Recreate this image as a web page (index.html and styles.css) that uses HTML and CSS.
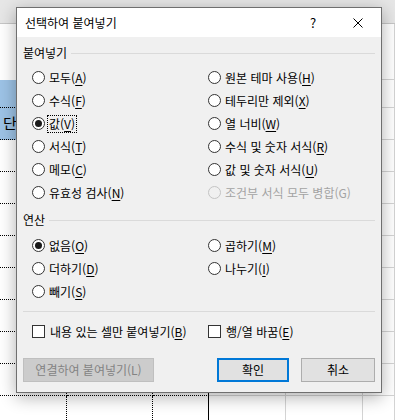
FILE: index.html
```html
<!DOCTYPE html>
<html lang="ko">
<head>
    <meta charset="UTF-8">
    <meta name="viewport" content="width=device-width, initial-scale=1.0">
    <title>선택하여 붙여넣기</title>
    <link rel="stylesheet" href="styles.css">
</head>
<body>
    <!-- worksheet behind the dialog -->
    <div class="sheet">
        <div class="sheet-head"></div>
        <div class="row tall"><span></span><span></span><span></span><span></span><span></span><span></span></div>
        <div class="row short sel"><span></span><span></span><span></span><span></span><span></span><span></span></div>
        <div class="row sel"><span class="cell-text">단가</span><span></span><span></span><span></span><span></span><span></span></div>
        <div class="row"><span></span><span></span><span></span><span></span><span></span><span></span></div>
        <div class="row"><span></span><span></span><span></span><span></span><span></span><span></span></div>
        <div class="row"><span></span><span></span><span></span><span></span><span></span><span></span></div>
        <div class="row"><span></span><span></span><span></span><span></span><span></span><span></span></div>
        <div class="row"><span></span><span></span><span></span><span></span><span></span><span></span></div>
        <div class="row"><span></span><span></span><span></span><span></span><span></span><span></span></div>
        <div class="row"><span></span><span></span><span></span><span></span><span></span><span></span></div>
        <div class="row"><span></span><span></span><span></span><span></span><span></span><span></span></div>
        <div class="row"><span></span><span></span><span></span><span></span><span></span><span></span></div>
    </div>

    <div class="dialog">
        <div class="titlebar">
            <span class="title">선택하여 붙여넣기</span>
            <span class="help">?</span>
            <span class="close">
                <svg width="10" height="10" viewBox="0 0 10 10">
                    <path d="M0.5 0.5 L9.5 9.5 M9.5 0.5 L0.5 9.5" stroke="#000" stroke-width="1" fill="none"/>
                </svg>
            </span>
        </div>

        <div class="body">
            <div class="group-label">붙여넣기</div>
            <div class="options">
                <div class="opt"><span class="radio"></span><span>모두(<u>A</u>)</span></div>
                <div class="opt"><span class="radio"></span><span>원본 테마 사용(<u>H</u>)</span></div>
                <div class="opt"><span class="radio"></span><span>수식(<u>F</u>)</span></div>
                <div class="opt"><span class="radio"></span><span>테두리만 제외(<u>X</u>)</span></div>
                <div class="opt"><span class="radio checked"></span><span class="focus">값(<u>V</u>)</span></div>
                <div class="opt"><span class="radio"></span><span>열 너비(<u>W</u>)</span></div>
                <div class="opt"><span class="radio"></span><span>서식(<u>T</u>)</span></div>
                <div class="opt"><span class="radio"></span><span>수식 및 숫자 서식(<u>R</u>)</span></div>
                <div class="opt"><span class="radio"></span><span>메모(<u>C</u>)</span></div>
                <div class="opt"><span class="radio"></span><span>값 및 숫자 서식(<u>U</u>)</span></div>
                <div class="opt"><span class="radio"></span><span>유효성 검사(<u>N</u>)</span></div>
                <div class="opt disabled"><span class="radio"></span><span>조건부 서식 모두 병합(G)</span></div>
            </div>

            <div class="group-label">연산</div>
            <div class="options ops">
                <div class="opt"><span class="radio checked"></span><span>없음(<u>O</u>)</span></div>
                <div class="opt"><span class="radio"></span><span>곱하기(<u>M</u>)</span></div>
                <div class="opt"><span class="radio"></span><span>더하기(<u>D</u>)</span></div>
                <div class="opt"><span class="radio"></span><span>나누기(<u>I</u>)</span></div>
                <div class="opt"><span class="radio"></span><span>빼기(<u>S</u>)</span></div>
            </div>

            <div class="separator"></div>

            <div class="options checks">
                <div class="opt"><span class="checkbox"></span><span>내용 있는 셀만 붙여넣기(<u>B</u>)</span></div>
                <div class="opt"><span class="checkbox"></span><span>행/열 바꿈(<u>E</u>)</span></div>
            </div>

            <div class="buttons">
                <button class="btn btn-disabled">연결하여 붙여넣기(L)</button>
                <div class="btn-group">
                    <button class="btn btn-default">확인</button>
                    <button class="btn btn-cancel">취소</button>
                </div>
            </div>
        </div>
    </div>
</body>
</html>
```

FILE: styles.css
```css
* {
    box-sizing: border-box;
}

body, html {
    margin: 0;
    padding: 0;
}

body {
    width: 395px;
    height: 420px;
    overflow: hidden;
    position: relative;
    background: #fff;
    font-family: "Noto Sans CJK KR", "Noto Sans", sans-serif;
    font-size: 12px;
    color: #000;
}

/* worksheet */
.sheet {
    height: 420px;
    overflow: hidden;
}

.sheet-head {
    height: 24px;
    background: #e6e6e6;
    border-bottom: 1px solid #c6c6c6;
}

.row {
    display: flex;
    height: 32px;
}

.row.tall {
    height: 56px;
}

.row.short {
    height: 28px;
}

.row span {
    display: block;
    height: 100%;
    border-bottom: 1px solid #d4d4d4;
    border-right: 1px solid #d4d4d4;
}

.row span:nth-child(1) { width: 67px; }
.row span:nth-child(2) { width: 86px; }
.row span:nth-child(3) { width: 56px; }
.row span:nth-child(4) { width: 77px; }
.row span:nth-child(5) { width: 77px; }
.row span:nth-child(6) { flex: 1; }

.row span:nth-child(-n+3) {
    border-bottom: 1px dotted #000;
    border-right: 1px dotted #000;
}

.row span:nth-child(3) {
    border-right: 1px solid #000;
}

.row.tall span:nth-child(-n+3) {
    border-bottom: 0;
}

.row.sel span:first-child {
    background: #9dc3e6;
}

.cell-text {
    padding: 6px 0 0 3px;
    font-size: 15px;
    line-height: 18px;
    white-space: nowrap;
    overflow: hidden;
}

/* dialog */
.dialog {
    position: absolute;
    left: 16px;
    top: 7px;
    width: 366px;
    height: 386px;
    background: #f0f0f0;
    border: 1px solid #6f6f6f;
    box-shadow: 0 4px 16px rgba(0, 0, 0, 0.32);
}

.titlebar {
    display: flex;
    align-items: center;
    height: 29px;
    background: #fff;
    padding-left: 8px;
}

.title {
    flex: 1;
    line-height: 16px;
}

.help {
    width: 44px;
    text-align: center;
    font-size: 13px;
}

.close {
    width: 46px;
    display: flex;
    justify-content: center;
    align-items: center;
}

.body {
    padding: 0 6px;
}

.group-label {
    display: flex;
    align-items: center;
    gap: 4px;
    margin-top: 8px;
    line-height: 16px;
}

.group-label::after {
    content: "";
    flex: 1;
    height: 1px;
    background: #dadada;
}

.options {
    display: grid;
    grid-template-columns: 176px 1fr;
    grid-auto-rows: 23px;
    margin: 5px 0 0 9px;
}

.ops {
    margin-top: 6px;
}

.opt {
    display: flex;
    align-items: center;
    gap: 4px;
    line-height: 16px;
    white-space: nowrap;
}

.opt u {
    text-decoration-thickness: 1px;
    text-underline-offset: 2px;
}

.radio {
    width: 13px;
    height: 13px;
    border: 1px solid #333;
    border-radius: 50%;
    background: #fff;
    display: flex;
    justify-content: center;
    align-items: center;
    flex-shrink: 0;
}

.radio.checked::after {
    content: "";
    width: 7px;
    height: 7px;
    border-radius: 50%;
    background: #1a1a1a;
}

.opt.disabled {
    color: #a3a3a3;
}

.opt.disabled .radio {
    border-color: #c4c4c4;
    background: #f0f0f0;
}

.focus {
    outline: 1px dotted #000;
    padding: 0 1px;
    margin: 0 -1px;
}

.separator {
    height: 1px;
    background: #dadada;
    margin-top: 8px;
}

.checks {
    margin-top: 8px;
}

.checks .opt {
    gap: 5px;
}

.checkbox {
    width: 13px;
    height: 13px;
    border: 1px solid #333;
    background: #fff;
    flex-shrink: 0;
}

.buttons {
    display: flex;
    justify-content: space-between;
    margin-top: 15px;
}

.btn-group {
    display: flex;
    gap: 12px;
}

.btn {
    height: 24px;
    padding: 0;
    font-family: inherit;
    font-size: 12px;
    line-height: 16px;
    background: #e1e1e1;
    border: 1px solid #adadad;
    color: #000;
}

.btn-disabled {
    width: 131px;
    background: #cccccc;
    border-color: #bfbfbf;
    color: #838383;
}

.btn-default {
    width: 72px;
    border: 2px solid #0078d7;
}

.btn-cancel {
    width: 74px;
}
```
